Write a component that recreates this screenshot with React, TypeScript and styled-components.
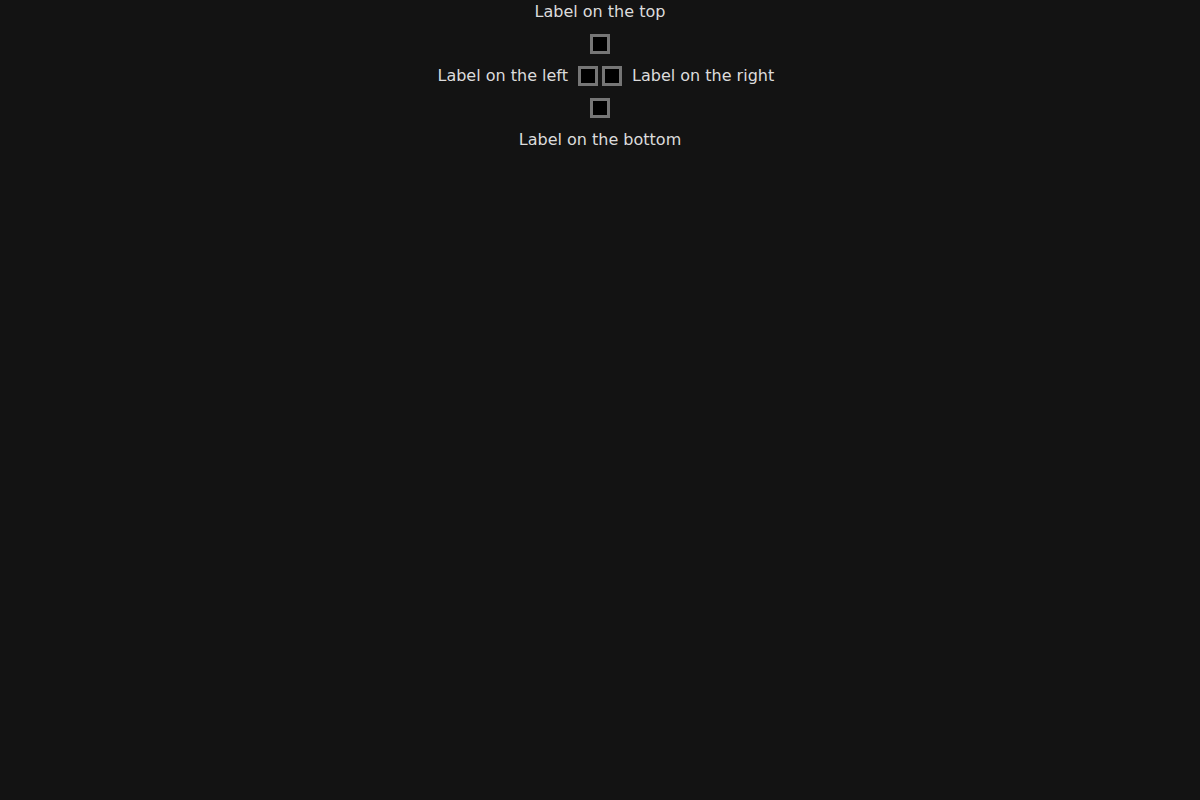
import React from "react";
import styled, { createGlobalStyle } from "styled-components";

const Global = createGlobalStyle`
  html, body { margin: 0; padding: 0; background: #131313; }
  body { font-family: "DejaVu Sans", sans-serif; color: #dcdcdc; }
`;

const Page = styled.div`
  display: flex;
  flex-direction: column;
  align-items: center;
  min-height: 800px;
  background: #131313;
`;

const Label = styled.span<{ $mt?: number; $pt?: number }>`
  font-size: 16px;
  line-height: 22px;
  color: #dcdcdc;
  margin-top: ${(p) => p.$mt ?? 0}px;
  padding-top: ${(p) => p.$pt ?? 0}px;
  white-space: nowrap;
`;

const Box = styled.input.attrs({ type: "checkbox" })<{ $mt?: number }>`
  appearance: none;
  margin: ${(p) => p.$mt ?? 0}px 0 0 0;
  width: 20px;
  height: 20px;
  box-sizing: border-box;
  border: 3px solid #767676;
  background: #000;
  display: block;
`;

const Row = styled.div`
  display: grid;
  grid-template-columns: 1fr auto 1fr;
  align-items: center;
  width: 100%;
  height: 20px;
  margin-top: 12px;
`;

const Pair = styled.div`
  display: flex;
  gap: 4px;
  margin: 0 10px;
`;

const Side = styled.span<{ $align: "end" | "start" }>`
  justify-self: ${(p) => p.$align};
  font-size: 16px;
  line-height: 20px;
  color: #dcdcdc;
  white-space: nowrap;
`;

export default function App() {
  return (
    <>
      <Global />
      <Page>
        <Label $pt={1}>Label on the top</Label>
        <Box $mt={11} aria-label="top" />
        <Row>
          <Side $align="end">Label on the left</Side>
          <Pair>
            <Box aria-label="left" />
            <Box aria-label="right" />
          </Pair>
          <Side $align="start">Label on the right</Side>
        </Row>
        <Box $mt={12} aria-label="bottom" />
        <Label $mt={11}>Label on the bottom</Label>
      </Page>
    </>
  );
}
